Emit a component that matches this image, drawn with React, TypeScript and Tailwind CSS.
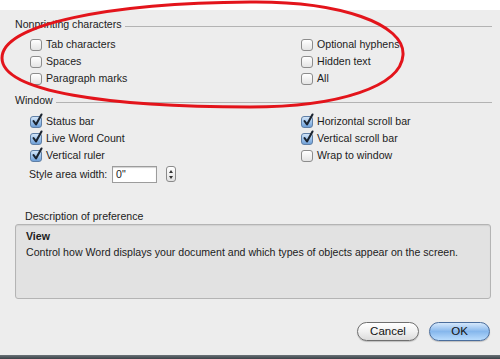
import type { ReactNode } from "react";

function Box({ checked = false }: { checked?: boolean }) {
  return (
    <span
      className={`relative inline-block h-[12px] w-[12px] shrink-0 rounded-[3px] border ${
        checked
          ? "border-[#5f7fa6] bg-gradient-to-b from-[#d3e5f7] via-[#9fc4ec] to-[#6f9fd6]"
          : "border-[#8c8c8c] bg-gradient-to-b from-white to-[#e4e4e4]"
      }`}
    >
      {checked && (
        <svg
          className="absolute -top-[4px] left-[0px]"
          width="13"
          height="14"
          viewBox="0 0 13 14"
        >
          <path
            d="M2.5 8 L5 11.5 L10.5 1.5"
            stroke="#1b2430"
            strokeWidth="2.1"
            strokeLinecap="round"
            strokeLinejoin="round"
            fill="none"
          />
        </svg>
      )}
    </span>
  );
}

function Check({ label, checked }: { label: string; checked?: boolean }) {
  return (
    <div className="flex h-[17px] items-center gap-[4px]">
      <Box checked={checked} />
      <span>{label}</span>
    </div>
  );
}

function Header({ children }: { children: ReactNode }) {
  return (
    <div className="flex h-[14px] items-center pl-[15px] pr-[8px]">
      <span>{children}</span>
      <div className="ml-[3px] mt-[4px] h-px flex-1 bg-[#b3b3b3]" />
    </div>
  );
}

export default function App() {
  return (
    <div className="relative flex h-[359px] w-[500px] flex-col overflow-hidden bg-[#ededed] font-['Liberation_Sans',Arial,sans-serif] text-[10.6px] leading-[13px] text-[#1c1c1c]">
      <div className="h-[10px] bg-white" />

      <div className="mt-[7px]">
        <Header>Nonprinting characters</Header>
      </div>
      <div className="mt-[5px] grid grid-cols-[271px_1fr] pl-[30px]">
        <div className="flex flex-col">
          <Check label="Tab characters" />
          <Check label="Spaces" />
          <Check label="Paragraph marks" />
        </div>
        <div className="flex flex-col">
          <Check label="Optional hyphens" />
          <Check label="Hidden text" />
          <Check label="All" />
        </div>
      </div>

      <div className="mt-[6px]">
        <Header>Window</Header>
      </div>
      <div className="mt-[6px] grid grid-cols-[271px_1fr] pl-[30px]">
        <div className="flex flex-col">
          <Check label="Status bar" checked />
          <Check label="Live Word Count" checked />
          <Check label="Vertical ruler" checked />
        </div>
        <div className="flex flex-col">
          <Check label="Horizontal scroll bar" checked />
          <Check label="Vertical scroll bar" checked />
          <Check label="Wrap to window" />
        </div>
      </div>

      <div className="mt-[1px] flex h-[18px] items-center pl-[29px]">
        <span className="w-[83px]">Style area width:</span>
        <div className="flex h-[17px] w-[45px] items-center border border-[#9c9c9c] bg-white pl-[3px] shadow-[inset_0_1px_1px_rgba(0,0,0,0.18)]">
          0"
        </div>
        <div className="ml-[9px] flex h-[16px] w-[10px] flex-col items-center justify-center gap-[3px] rounded-[3px] border border-[#8a8a8a] bg-gradient-to-b from-white to-[#e2e2e2]">
          <svg width="4" height="3" viewBox="0 0 4 3">
            <path d="M2 0 L4 3 L0 3 Z" fill="#333" />
          </svg>
          <svg width="4" height="3" viewBox="0 0 4 3">
            <path d="M0 0 L4 0 L2 3 Z" fill="#333" />
          </svg>
        </div>
      </div>

      <div className="mt-[26px] flex h-[14px] items-center pl-[25px]">
        Description of preference
      </div>
      <div className="ml-[15px] mr-[9px] mt-[1px] h-[75px] rounded-[3px] border border-[#b4b4b4] bg-[#e2e2e2] pl-[10px] pt-[5px] shadow-[inset_0_1px_1px_rgba(0,0,0,0.08)]">
        <div className="h-[14px] font-bold">View</div>
        <div className="mt-[2px]">
          Control how Word displays your document and which types of objects
          appear on the screen.
        </div>
      </div>

      <div className="mt-[23px] flex justify-end gap-[10px] pr-[10px]">
        <button className="flex h-[19px] w-[62px] items-center justify-center rounded-full border border-[#6f6f6f] bg-gradient-to-b from-white via-[#f1f1f1] to-[#dcdcdc] text-[11.5px] text-[#111] shadow-[0_1px_1px_rgba(0,0,0,0.2)]">
          Cancel
        </button>
        <button className="flex h-[19px] w-[61px] items-center justify-center rounded-full border border-[#4a6d9c] bg-gradient-to-b from-[#d6e8fb] via-[#86b7ec] to-[#b9dcfd] text-[11.5px] text-[#111] shadow-[0_1px_1px_rgba(0,0,0,0.2)]">
          OK
        </button>
      </div>

      <div className="flex-1" />
      <div className="h-[4px] bg-gradient-to-b from-[#6b7378] to-[#3b4248]" />

      <svg
        className="pointer-events-none absolute left-0 top-0"
        width="500"
        height="359"
        viewBox="0 0 500 359"
      >
        <path
          d="M2 58 C2 24 110 3 250 2 C340 1 405 24 403 55 C401 86 340 107 250 107 C110 107 2 92 2 58 Z"
          stroke="#e3141b"
          strokeWidth="3"
          fill="none"
        />
      </svg>
    </div>
  );
}
